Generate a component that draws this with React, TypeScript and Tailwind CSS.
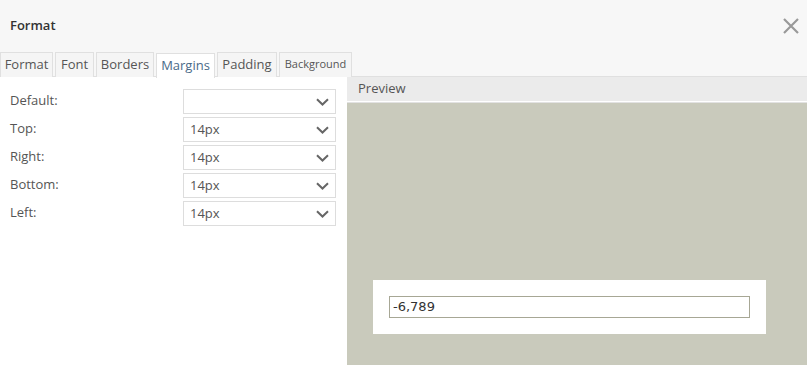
import { useState } from 'react';

const tabs = [
  { name: 'Format', w: 'w-[53px]' },
  { name: 'Font', w: 'w-[39px]' },
  { name: 'Borders', w: 'w-[58px]' },
  { name: 'Margins', w: 'w-[59px]' },
  { name: 'Padding', w: 'w-[60px]' },
  { name: 'Background', w: 'w-[73px]' },
];

const rows = [
  { label: 'Default:', value: '' },
  { label: 'Top:', value: '14px' },
  { label: 'Right:', value: '14px' },
  { label: 'Bottom:', value: '14px' },
  { label: 'Left:', value: '14px' },
];

function Chevron() {
  return (
    <svg width="13" height="8" viewBox="0 0 13 8" fill="none">
      <path d="M1 1.2l5.5 5.3 5.5-5.3" stroke="#666" strokeWidth="2" />
    </svg>
  );
}

export default function App() {
  const [active, setActive] = useState('Margins');

  return (
    <div className="w-[807px] h-[365px] bg-white overflow-hidden flex flex-col font-['Open_Sans',sans-serif] text-[#555]">
      {/* Header */}
      <div className="h-[52px] bg-[#f7f7f7] flex items-center justify-between pl-[10px] pr-[7px]">
        <span className="text-[13px] font-semibold text-[#333]">Format</span>
        <svg width="18" height="18" viewBox="0 0 18 18">
          <path d="M2 2l14 14M16 2L2 16" stroke="#999" strokeWidth="2.2" />
        </svg>
      </div>

      {/* Tabs */}
      <div className="h-[25px] bg-[#f7f7f7] border-b border-[#e0e0e0] flex gap-[2px]">
        {tabs.map((t) => (
          <button
            key={t.name}
            onClick={() => setActive(t.name)}
            className={`${t.w} h-[25px] border border-b-0 border-[#e0e0e0] flex items-center justify-center pb-[1px] ${
              active === t.name ? 'bg-white text-[#4a6a88] relative top-px' : 'bg-[#f5f5f5]'
            } ${t.name === 'Background' ? 'text-[11px]' : 'text-[13px]'}`}
          >
            {t.name}
          </button>
        ))}
      </div>

      {/* Body */}
      <div className="flex flex-1">
        <div className="w-[347px] pt-[12px] flex flex-col">
          {rows.map((r) => (
            <div key={r.label} className="h-[28px] flex items-start">
              <span className="w-[183px] pl-[10px] pt-[1px] text-[13px] leading-[20px] text-[#555]">{r.label}</span>
              <div className="w-[153px] h-[25px] border border-[#ddd] bg-white flex items-center justify-between pl-[6px] pr-[6px]">
                <span className="text-[13px] text-[#555]">{r.value}</span>
                <Chevron />
              </div>
            </div>
          ))}
        </div>

        <div className="flex-1 flex flex-col">
          <div className="h-[24px] bg-[#ebebeb] flex items-center pl-[11px] text-[13px] text-[#555]">Preview</div>
          <div className="h-[1px] bg-white" />
          <div className="h-[1px] bg-[#e2e2e2]" />
          <div className="flex-1 bg-[#c9cabc] pt-[177px] pl-[26px] pr-[41px]">
            <div className="h-[54px] bg-white px-[16px] pt-[16px]">
              <div className="h-[22px] border border-[#a7a795] flex items-center pl-[3px] font-['DejaVu_Sans',sans-serif] text-[13px] text-[#333]">
                -6,789
              </div>
            </div>
          </div>
        </div>
      </div>
    </div>
  );
}
